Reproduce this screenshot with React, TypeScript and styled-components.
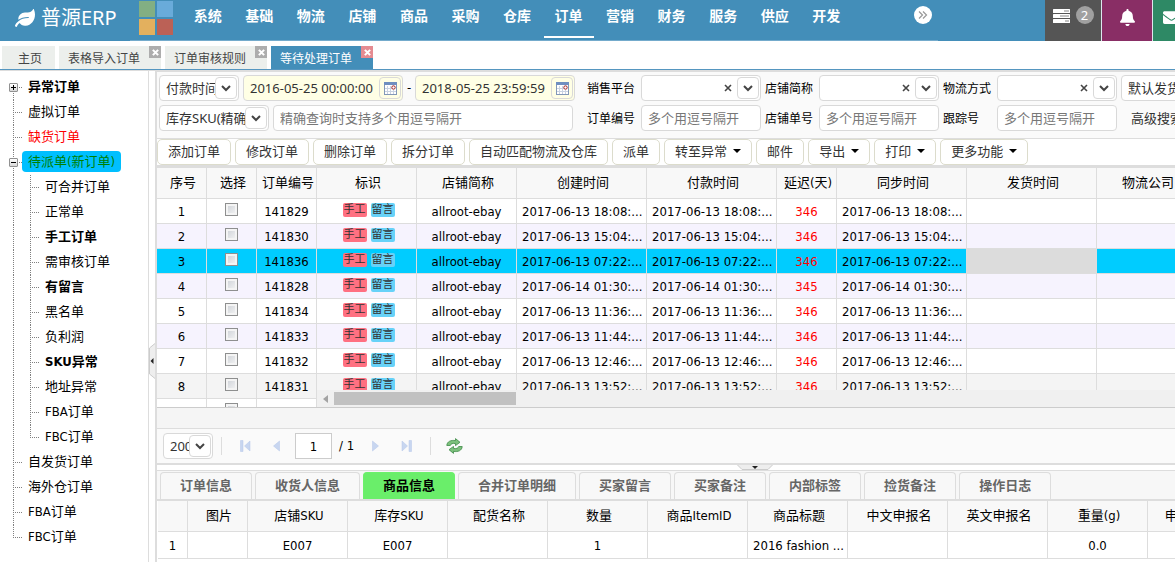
import React from 'react';
import styled, { createGlobalStyle, css } from 'styled-components';
import { FaBell, FaEnvelope, FaLeaf } from 'react-icons/fa';

const uiFont = `"Noto Sans", "Noto Sans CJK SC", sans-serif`;
const gridFont = `"DejaVu Sans Condensed", "Noto Sans CJK SC", sans-serif`;
const blue = '#438eb9';
const line = '#dddddd';

const GlobalStyle = createGlobalStyle`
  *, *::before, *::after { box-sizing: border-box; }
  body { margin: 0; background: #fff; color: #000; font: 13px/20px ${gridFont}; }
  button, input, select { margin: 0; font: inherit; color: inherit; }
  button { padding: 0; border: 0; background: none; cursor: pointer; }
  a { color: inherit; text-decoration: none; }
`;

const Page = styled.div`
  display: flex;
  flex-direction: column;
  min-height: 100vh;
  overflow: hidden;
  white-space: nowrap;
`;

/* ---------- top bar ---------- */

const TopBar = styled.header`
  display: flex;
  height: 41px;
  background: ${blue};
  color: #fff;
  font-family: ${uiFont};
`;

const Brand = styled.a`
  display: flex;
  flex: none;
  align-items: center;
  gap: 6px;
  width: 130px;
  height: 36px;
  padding-left: 15px;
  font-size: 20px;
  line-height: 36px;
`;

const MenuBar = styled.div`
  display: flex;
  flex: none;
  width: 808px;
  border-bottom: 1px solid #74abcc;
`;

const Shortcuts = styled.div`
  display: grid;
  flex: none;
  grid-template-columns: 16px 16px;
  grid-auto-rows: 16px;
  gap: 2px;
  width: 52px;
  padding: 1px 0 0 9px;
`;

const Shortcut = styled.button<{ $color: string }>`
  background: ${(p) => p.$color};
`;

const Menu = styled.nav`
  display: grid;
  flex: none;
  grid-template-columns: repeat(13, 1fr);
  justify-items: center;
  width: 670px;
`;

const MenuLink = styled.a<{ $active?: boolean }>`
  width: 50px;
  height: 38px;
  border-bottom: 2px solid ${(p) => (p.$active ? '#fff' : 'transparent')};
  font-size: 14px;
  font-weight: bold;
  line-height: 32px;
  text-align: center;
`;

const MoreButton = styled.button`
  width: 18px;
  height: 18px;
  margin: 6px 0 0 62px;
  border-radius: 9px;
  background: #fff;
  line-height: 0;
`;

const Notices = styled.div`
  display: flex;
  flex: none;
  gap: 1px;
  margin-left: 107px;
  background: #dde8ee;
`;

const Notice = styled.button<{ $color: string; $width: number }>`
  display: flex;
  justify-content: center;
  gap: 6px;
  width: ${(p) => p.$width}px;
  padding-top: 6px;
  background: ${(p) => p.$color};
  svg { flex: none; margin-top: 3px; }
`;

const Badge = styled.span`
  width: 18px;
  height: 18px;
  border-radius: 9px;
  background: #a0a0a0;
  font-size: 13px;
  line-height: 18px;
`;

/* ---------- page tabs ---------- */

const PageTabs = styled.div`
  display: flex;
  gap: 4px;
  padding: 5px 2px 0;
  border-bottom: 1px solid #5596c0;
  font: 12px/21px ${uiFont};
`;

const PageTab = styled.div<{ $active?: boolean; $closable?: boolean }>`
  position: relative;
  padding: ${(p) => (p.$closable ? '2px 21px 0 9px' : '2px 13px 0 16px')};
  background: ${(p) => (p.$active ? blue : '#ecefec')};
  color: ${(p) => (p.$active ? '#fff' : '#444')};
`;

const CloseTab = styled.button<{ $active?: boolean }>`
  position: absolute;
  top: 0;
  right: 0;
  width: 12px;
  height: 12px;
  background: ${(p) => (p.$active ? '#e58b91' : '#adadad')};
  line-height: 0;
`;

/* ---------- sidebar ---------- */

const Main = styled.div`
  display: flex;
  flex: 1;
`;

const Sidebar = styled.aside`
  flex: none;
  width: 149px;
  padding: 4px 0 0 5px;
  border-top: 1px solid ${line};
  border-right: 1px solid ${line};
`;

const Tree = styled.ul`
  margin: 0;
  padding: 0;
  list-style: none;
`;

const TreeRow = styled.li`
  display: flex;
  align-items: center;
  height: 25px;
`;

type GuideKind = 'first' | 'mid' | 'last' | 'through' | 'blank';

const dotsDown = 'repeating-linear-gradient(#808080 0 1px, transparent 1px 2px)';
const dotsAcross = 'repeating-linear-gradient(90deg, #808080 0 1px, transparent 1px 2px)';

const guideBackground: Record<GuideKind, string> = {
  first: `${dotsAcross} 8px 12px / 10px 1px no-repeat, ${dotsDown} 8px 12px / 1px 13px no-repeat`,
  mid: `${dotsAcross} 8px 12px / 10px 1px no-repeat, ${dotsDown} 8px 0 / 1px 25px no-repeat`,
  last: `${dotsAcross} 8px 12px / 10px 1px no-repeat, ${dotsDown} 8px 0 / 1px 13px no-repeat`,
  through: `${dotsDown} 8px 0 / 1px 25px no-repeat`,
  blank: 'none',
};

const Guide = styled.span<{ $kind: GuideKind }>`
  display: flex;
  align-items: center;
  flex: none;
  width: 17px;
  height: 25px;
  padding-left: 4px;
  background: ${(p) => guideBackground[p.$kind]};
`;

const Expander = styled.button`
  width: 9px;
  height: 9px;
  border: 1px solid #919191;
  border-radius: 1px;
  background: linear-gradient(#fff, #d8d8d8);
  line-height: 0;
`;

const TreeLink = styled.a<{ $bold?: boolean; $red?: boolean; $selected?: boolean }>`
  margin-bottom: 2px;
  padding: 0 6px;
  border-radius: 4px;
  line-height: 21px;
  font-weight: ${(p) => (p.$bold ? 'bold' : 'normal')};
  color: ${(p) => (p.$red ? '#f00' : p.$selected ? '#008000' : '#000')};
  background: ${(p) => (p.$selected ? '#00bfff' : 'transparent')};
`;

const SideSplitter = styled.div`
  flex: none;
  width: 6px;
  padding-top: 272px;
  border-top: 1px solid ${line};
  line-height: 0;
`;

/* ---------- workspace ---------- */

const Workspace = styled.main`
  flex: 1;
  min-width: 0;
  overflow: hidden;
  border-top: 1px solid ${line};
  border-left: 2px solid ${line};
`;

const Filters = styled.form`
  display: flex;
  flex-direction: column;
  gap: 4px;
  padding: 3px 0 7px 2px;
  border-top: 1px solid ${line};
  border-bottom: 1px solid ${line};
  background: #fafafa;
`;

const FilterRow = styled.div`
  display: flex;
  align-items: center;
  height: 26px;
`;

const Field = styled.div<{ $width: number; $yellow?: boolean; $gap?: number }>`
  display: grid;
  grid-template-columns: minmax(0, 1fr) 24px;
  align-items: center;
  flex: none;
  width: ${(p) => p.$width}px;
  height: 26px;
  margin-right: ${(p) => p.$gap ?? 4}px;
  border: 1px solid #d9d9d9;
  border-radius: 4px;
  background: ${(p) => (p.$yellow ? '#ffffe5' : '#fff')};
  font: 13px/20px ${uiFont};
  color: #333;
`;

const fieldControl = css`
  grid-row: 1;
  grid-column: 1 / -1;
  width: 100%;
  height: 24px;
  padding: 0 0 0 6px;
  border: 0;
  outline: 0;
  background: none;
`;

const TextInput = styled.input`
  ${fieldControl}
  &::placeholder { color: #777; opacity: 1; }
`;

const DateInput = styled.input`
  ${fieldControl}
  grid-column: 1;
`;

const Select = styled.select`
  ${fieldControl}
  appearance: none;
`;

const InsetBox = styled.span<{ $yellow?: boolean }>`
  display: flex;
  grid-row: 1;
  grid-column: 2;
  align-items: center;
  justify-content: center;
  justify-self: center;
  width: 22px;
  height: 22px;
  border: 1px solid #d9d9d9;
  border-radius: 4px;
  background: ${(p) => (p.$yellow ? '#ffffe5' : '#fff')};
  pointer-events: none;
`;

const CalendarButton = styled(InsetBox).attrs({ as: 'button', type: 'button' } as object)`
  pointer-events: auto;
`;

const ClearButton = styled.button`
  grid-row: 1;
  grid-column: 1;
  justify-self: end;
  width: 16px;
  height: 20px;
  line-height: 0;
`;

const Dash = styled.span`
  flex: none;
  width: 12px;
  text-align: center;
`;

const FieldLabel = styled.label`
  flex: none;
  width: 54px;
  padding-top: 2px;
  font-size: 12px;
  line-height: 16px;
`;

const AdvancedLink = styled.a`
  margin-left: 10px;
  color: #333;
  font-family: ${uiFont};
`;

const Actions = styled.div`
  display: flex;
  gap: 4px;
  border-bottom: 3px solid ${line};
`;

const ActionButton = styled.button`
  display: flex;
  flex: none;
  align-items: center;
  gap: 6px;
  height: 26px;
  padding: 0 10px 2px;
  border: 1px solid #dcdccc;
  border-radius: 5px;
  background: #fff;
  color: #333;
  font: 13px/22px ${uiFont};
`;

const DownTriangle = styled.span`
  width: 8px;
  border: 4px solid transparent;
  border-top-color: #000;
  border-bottom-width: 0;
`;

/* ---------- data grids ---------- */

const Grid = styled.div`
  display: flex;
  height: 240px;
  overflow: hidden;
  border-bottom: 1px solid #ccc;
`;

const FrozenPart = styled.div`
  flex: none;
  overflow: hidden;
`;

const ScrollPart = styled.div`
  display: flex;
  flex: 1;
  flex-direction: column;
  min-width: 0;
`;

const ScrollBody = styled.div`
  flex: 1;
  min-height: 0;
  overflow: hidden;
`;

const Table = styled.table`
  table-layout: fixed;
  width: 0;
  border-collapse: separate;
  border-spacing: 0;
`;

const Th = styled.th`
  height: 31px;
  padding: 0 0 0 3px;
  overflow: hidden;
  border-right: 1px solid ${line};
  border-bottom: 1px solid ${line};
  background: #f8f8f8;
  font-weight: normal;
  line-height: 30px;
`;

const Td = styled.td<{ $left?: boolean; $late?: boolean; $muted?: boolean; $tall?: boolean }>`
  height: ${(p) => (p.$tall ? 27 : 25)}px;
  padding: 2px 5px 0;
  overflow: hidden;
  border-right: 1px solid ${line};
  border-bottom: 1px solid ${line};
  text-align: ${(p) => (p.$left ? 'left' : 'center')};
  line-height: ${(p) => (p.$tall ? 24 : 22)}px;
  color: ${(p) => (p.$late ? '#f00' : 'inherit')};
  background: ${(p) => (p.$muted ? '#dcdcdc' : 'transparent')};
`;

const Row = styled.tr<{ $tone: 'plain' | 'striped' | 'selected' | 'hover' }>`
  background: ${(p) => ({ plain: '#fff', striped: '#f6f3fe', selected: '#00ccff', hover: '#f4f4f4' })[p.$tone]};
`;

const CheckBox = styled.input`
  display: block;
  appearance: none;
  width: 13px;
  height: 13px;
  margin: 0 auto 5px;
  border: 1px solid #8e8f8f;
  background: linear-gradient(135deg, #cbcfd5, #f6f6f6);
  box-shadow: inset 0 0 0 2px #f4f4f4;
`;

const Tags = styled.div`
  display: flex;
  justify-content: center;
  gap: 4px;
  margin-bottom: 4px;
  padding-left: 4px;
`;

const Tag = styled.span<{ $color: string }>`
  width: 24px;
  border-radius: 2px;
  background: ${(p) => p.$color};
  font-size: 11px;
  line-height: 14px;
  color: #333;
`;

const ScrollTrack = styled.div`
  display: flex;
  flex: none;
  align-items: center;
  gap: 6px;
  height: 17px;
  padding-left: 6px;
  background: #f0f0f0;
`;

const LeftTriangle = styled.span`
  border: 4px solid transparent;
  border-right: 5px solid #a3a3a3;
  border-left-width: 0;
`;

const ScrollThumb = styled.span`
  width: 182px;
  height: 13px;
  background: #c1c1c1;
`;

const GridFooter = styled.div`
  height: 21px;
  border-bottom: 1px solid ${line};
  background: #f5f5f5;
`;

const Pager = styled.div`
  display: flex;
  align-items: center;
  height: 36px;
  padding-left: 6px;
  border-bottom: 2px solid ${line};
  background: #fafafa;
`;

const PagerButton = styled.button`
  display: flex;
  align-items: center;
  justify-content: center;
  width: 31px;
  height: 24px;
`;

const Divider = styled.span`
  width: 1px;
  height: 18px;
  margin: 0 8px;
  background: ${line};
`;

const PageInput = styled.input`
  width: 37px;
  height: 26px;
  margin: 0 7px 0 3px;
  padding: 0;
  border: 1px solid #ccc;
  background: #fff;
  text-align: center;
`;

const PageCount = styled.span`
  width: 21px;
`;

const BottomSplitter = styled.div`
  height: 5px;
  padding-left: 57%;
  line-height: 0;
`;

const DetailTabs = styled.div`
  display: flex;
  gap: 3px;
  padding: 1px 0 0 3px;
  border-top: 1px solid ${line};
  border-bottom: 2px solid ${line};
  background: #f7f7f7;
`;

const DetailTab = styled.button<{ $active?: boolean }>`
  flex: none;
  height: 27px;
  padding: 0 19px 2px;
  border: 1px solid ${(p) => (p.$active ? '#6cf06c' : line)};
  border-bottom: 0;
  border-radius: 4px 4px 0 0;
  background: ${(p) => (p.$active ? '#6aee6a' : '#f8f8f8')};
  color: ${(p) => (p.$active ? '#000' : '#666')};
  font: bold 13px/24px ${uiFont};
`;

const DetailTable = styled.div`
  padding-left: 1px;
  overflow: hidden;
`;

/* ---------- small drawings ---------- */

const Chevron = () => (
  <svg width="10" height="7" viewBox="0 0 10 7" fill="none" stroke="#444" strokeWidth="2">
    <path d="M1 1l4 4 4-4" />
  </svg>
);

const CalendarIcon = () => (
  <svg width="13" height="13" viewBox="0 0 13 13">
    <rect x="0.5" y="0.5" width="12" height="12" fill="#fff" stroke="#8298b8" />
    <path d="M0 0h13v3H0z" fill="#6f8fc0" />
    <path d="M3.5 4v8M6.5 4v8M9.5 8v4M1 6.5h7M1 9.5h11" stroke="#c9d3e2" />
    <circle cx="9.5" cy="5.5" r="1.7" fill="#fff" stroke="#a02020" />
  </svg>
);

const Cross = ({ color, size }: { color: string; size: number }) => (
  <svg width={size} height={size} viewBox="0 0 8 8" stroke={color} strokeWidth={size > 7 ? 1.6 : 2.4}>
    <path d="M1 1l6 6M7 1l-6 6" />
  </svg>
);

const PlusMinus = ({ plus }: { plus: boolean }) => (
  <svg width="7" height="7" viewBox="0 0 7 7" fill="#000">
    <path d="M1 3h5v1H1z" />
    {plus && <path d="M3 1h1v5H3z" />}
  </svg>
);

const TasksIcon = () => (
  <svg width="17" height="14" viewBox="0 0 17 14" fill="#fff">
    <rect width="17" height="4" rx="0.5" />
    <rect y="5" width="17" height="4" rx="0.5" />
    <rect y="10" width="17" height="4" rx="0.5" />
    <path d="M11 1.5h5v1h-5zM7 6.5h9v1H7zM12 11.5h4v1h-4z" fill="#888" />
  </svg>
);

const PageArrow = ({ kind }: { kind: 'first' | 'prev' | 'next' | 'last' }) => {
  const back = kind === 'first' || kind === 'prev';
  const end = kind === 'first' || kind === 'last';
  return (
    <svg width="11" height="12" viewBox="0 0 11 12" fill="#c8d6f0" stroke="#b4c6e8" strokeWidth="0.5">
      <g transform={back ? undefined : 'matrix(-1 0 0 1 11 0)'}>
        {end && <path d="M0.5 0.5h2.5v11h-2.5z" />}
        <path d={end ? 'M10 1v10L4.5 6z' : 'M8.5 1v10L2.5 6z'} />
      </g>
    </svg>
  );
};

const RefreshIcon = () => (
  <svg width="17" height="16" viewBox="0 0 17 16" fill="#7cc07c" stroke="#3f8a48" strokeWidth="0.8">
    <path d="M0.8 7.5C1 3.5 5 1.8 9.5 2.6V0.6L14 4.3 9.5 7.6V5.6C6.5 5 4.8 5.8 4.3 7.5z" />
    <path d="M16.2 8.5C16 12.5 12 14.2 7.5 13.4v2L3 11.7 7.5 8.4v2c3 0.6 4.700-0.2 5.200-1.9z" />
  </svg>
);

/* ---------- data ---------- */

const shortcuts = ['#82af83', '#69abda', '#e3b05e', '#bb6156'];
const menu = ['系统', '基础', '物流', '店铺', '商品', '采购', '仓库', '订单', '营销', '财务', '服务', '供应', '开发'];

type Node = { text: string; guides: GuideKind[]; bold?: boolean; red?: boolean; selected?: boolean; toggle?: 'plus' | 'minus' };
const child = (text: string, bold = false, last = false): Node => ({ text, bold, guides: ['through', last ? 'last' : 'mid'] });
const nodes: Node[] = [
  { text: '异常订单', guides: ['first'], bold: true, toggle: 'plus' },
  { text: '虚拟订单', guides: ['mid'] },
  { text: '缺货订单', guides: ['mid'], red: true },
  { text: '待派单(新订单)', guides: ['mid'], selected: true, toggle: 'minus' },
  child('可合并订单'),
  child('正常单'),
  child('手工订单', true),
  child('需审核订单'),
  child('有留言', true),
  child('黑名单'),
  child('负利润'),
  child('SKU异常', true),
  child('地址异常'),
  child('FBA订单'),
  child('FBC订单', false, true),
  { text: '自发货订单', guides: ['mid'] },
  { text: '海外仓订单', guides: ['mid'] },
  { text: 'FBA订单', guides: ['mid'] },
  { text: 'FBC订单', guides: ['last'] },
];

const actions: [string, boolean?][] = [
  ['添加订单'], ['修改订单'], ['删除订单'], ['拆分订单'], ['自动匹配物流及仓库'], ['派单'],
  ['转至异常', true], ['邮件'], ['导出', true], ['打印', true], ['更多功能', true],
];

const orders = [
  { id: '141829', time: '2017-06-13 18:08:...', late: 346 },
  { id: '141830', time: '2017-06-13 15:04:...', late: 346 },
  { id: '141836', time: '2017-06-13 07:22:...', late: 346 },
  { id: '141828', time: '2017-06-14 01:30:...', late: 345 },
  { id: '141834', time: '2017-06-13 11:36:...', late: 346 },
  { id: '141833', time: '2017-06-13 11:44:...', late: 346 },
  { id: '141832', time: '2017-06-13 12:46:...', late: 346 },
  { id: '141831', time: '2017-06-13 13:52:...', late: 346 },
];
const tone = (i: number) => (i === 2 ? 'selected' : i === 7 ? 'hover' : i % 2 ? 'striped' : 'plain');

const frozenColumns: [string, number][] = [['序号', 50], ['选择', 50], ['订单编号', 60]];
const scrollColumns: [string, number][] = [
  ['标识', 100], ['店铺简称', 100], ['创建时间', 130], ['付款时间', 130], ['延迟(天)', 60],
  ['同步时间', 130], ['发货时间', 130], ['物流公司', 100],
];
const detailColumns: [string, number, string][] = [
  ['', 30, '1'], ['图片', 60, ''], ['店铺SKU', 100, 'E007'], ['库存SKU', 100, 'E007'], ['配货名称', 100, ''],
  ['数量', 100, '1'], ['商品ItemID', 100, ''], ['商品标题', 100, '2016 fashion ...'], ['中文申报名', 100, ''],
  ['英文申报名', 100, ''], ['重量(g)', 100, '0.0'], ['申报价格($)', 100, ''],
];
const detailTabs = ['订单信息', '收货人信息', '商品信息', '合并订单明细', '买家留言', '买家备注', '内部标签', '捡货备注', '操作日志'];

/* ---------- composed parts ---------- */

const Columns = ({ columns }: { columns: (readonly [string, number, ...string[]])[] }) => (
  <>
    <colgroup>
      {columns.map(([name, width]) => <col key={name} width={width} />)}
    </colgroup>
    <thead>
      <tr>{columns.map(([name]) => <Th key={name} scope="col">{name}</Th>)}</tr>
    </thead>
  </>
);

const SelectField = ({ label, width, value }: { label: string; width: number; value: string }) => (
  <Field $width={width}>
    <Select aria-label={label} defaultValue={value}><option>{value}</option></Select>
    <InsetBox><Chevron /></InsetBox>
  </Field>
);

const DateField = ({ label, value, gap }: { label: string; value: string; gap: number }) => (
  <Field $width={160} $yellow $gap={gap}>
    <DateInput aria-label={label} defaultValue={value} />
    <CalendarButton aria-label={`选择${label}`} $yellow><CalendarIcon /></CalendarButton>
  </Field>
);

const ComboField = ({ id, label }: { id: string; label: string }) => (
  <>
    <FieldLabel htmlFor={id}>{label}</FieldLabel>
    <Field $width={120}>
      <Select id={id} defaultValue=""><option value="" /></Select>
      <ClearButton type="button" aria-label="清除"><Cross color="#444" size={8} /></ClearButton>
      <InsetBox><Chevron /></InsetBox>
    </Field>
  </>
);

const TextField = ({ id, label }: { id: string; label: string }) => (
  <>
    <FieldLabel htmlFor={id}>{label}</FieldLabel>
    <Field $width={120}><TextInput id={id} placeholder="多个用逗号隔开" /></Field>
  </>
);

export default function App() {
  return (
    <Page>
      <GlobalStyle />
      <TopBar>
        <Brand href="#"><FaLeaf size={20} />普源ERP</Brand>
        <MenuBar>
          <Shortcuts>
            {shortcuts.map((c, i) => <Shortcut key={c} $color={c} aria-label={`快捷方式${i + 1}`} />)}
          </Shortcuts>
          <Menu>
            {menu.map((m) => <MenuLink key={m} href="#" $active={m === '订单'}>{m}</MenuLink>)}
          </Menu>
          <MoreButton aria-label="更多">
            <svg width="18" height="18" viewBox="0 0 18 18" fill="none" stroke="#999">
              <path d="M5 5.5l3.5 3.5L5 12.5M9 5.5l3.5 3.5L9 12.5" strokeWidth="1.2" />
            </svg>
          </MoreButton>
        </MenuBar>
        <Notices>
          <Notice $color="#555555" $width={56} aria-label="任务"><TasksIcon /><Badge>2</Badge></Notice>
          <Notice $color="#892e65" $width={50} aria-label="通知"><FaBell size={17} /></Notice>
          <Notice $color="#2e8965" $width={36} aria-label="邮件"><FaEnvelope size={17} /></Notice>
        </Notices>
      </TopBar>

      <PageTabs>
        <PageTab>主页</PageTab>
        {['表格导入订单', '订单审核规则', '等待处理订单'].map((t, i) => (
          <PageTab key={t} $closable $active={i === 2}>
            {t}
            <CloseTab $active={i === 2} aria-label={`关闭${t}`}><Cross color="#fff" size={7} /></CloseTab>
          </PageTab>
        ))}
      </PageTabs>

      <Main>
        <Sidebar>
          <Tree>
            {nodes.map((n, i) => (
              <TreeRow key={i}>
                {n.guides.map((g, j) => (
                  <Guide key={j} $kind={g}>
                    {n.toggle && (
                      <Expander aria-label={n.text}><PlusMinus plus={n.toggle === 'plus'} /></Expander>
                    )}
                  </Guide>
                ))}
                <TreeLink href="#" $bold={n.bold} $red={n.red} $selected={n.selected}>{n.text}</TreeLink>
              </TreeRow>
            ))}
          </Tree>
        </Sidebar>
        <SideSplitter>
          <svg width="6" height="36" viewBox="0 0 6 36">
            <path d="M6 0.5L0.5 5v26L6 35.5" fill="#eee" stroke="#ccc" />
            <path d="M4.5 15v6L1.5 18z" fill="#222" />
          </svg>
        </SideSplitter>

        <Workspace>
          <Filters onSubmit={(e) => e.preventDefault()}>
            <FilterRow>
              <SelectField label="时间类型" width={80} value="付款时间" />
              <DateField label="开始时间" value="2016-05-25 00:00:00" gap={0} />
              <Dash>-</Dash>
              <DateField label="结束时间" value="2018-05-25 23:59:59" gap={12} />
              <ComboField id="platform" label="销售平台" />
              <ComboField id="shop" label="店铺简称" />
              <ComboField id="shipping" label="物流方式" />
              <SelectField label="发货仓库" width={120} value="默认发货仓库" />
            </FilterRow>
            <FilterRow>
              <SelectField label="查询类型" width={110} value="库存SKU(精确)" />
              <Field $width={300} $gap={14}>
                <TextInput aria-label="查询内容" placeholder="精确查询时支持多个用逗号隔开" />
              </Field>
              <TextField id="order-no" label="订单编号" />
              <TextField id="shop-no" label="店铺单号" />
              <TextField id="track-no" label="跟踪号" />
              <AdvancedLink href="#">高级搜索</AdvancedLink>
            </FilterRow>
          </Filters>

          <Actions>
            {actions.map(([text, more]) => (
              <ActionButton key={text}>{text}{more && <DownTriangle />}</ActionButton>
            ))}
          </Actions>

          <Grid>
            <FrozenPart>
              <Table>
                <Columns columns={frozenColumns} />
                <tbody>
                  {orders.map((o, i) => (
                    <Row key={o.id} $tone={tone(i)}>
                      <Td>{i + 1}</Td>
                      <Td><CheckBox type="checkbox" aria-label={`选择订单${o.id}`} /></Td>
                      <Td>{o.id}</Td>
                    </Row>
                  ))}
                  <Row $tone="plain">
                    <Td />
                    <Td><CheckBox type="checkbox" aria-label="选择订单" /></Td>
                    <Td />
                  </Row>
                </tbody>
              </Table>
            </FrozenPart>
            <ScrollPart>
              <ScrollBody>
                <Table>
                  <Columns columns={scrollColumns} />
                  <tbody>
                    {orders.map((o, i) => (
                      <Row key={o.id} $tone={tone(i)}>
                        <Td>
                          <Tags><Tag $color="#ff7081">手工</Tag><Tag $color="#67d2f8">留言</Tag></Tags>
                        </Td>
                        <Td>allroot-ebay</Td>
                        <Td $left>{o.time}</Td>
                        <Td $left>{o.time}</Td>
                        <Td $late>{o.late}</Td>
                        <Td $left>{o.time}</Td>
                        <Td $muted={i === 2} />
                        <Td />
                      </Row>
                    ))}
                  </tbody>
                </Table>
              </ScrollBody>
              <ScrollTrack><LeftTriangle /><ScrollThumb /></ScrollTrack>
            </ScrollPart>
          </Grid>
          <GridFooter />

          <Pager>
            <Field $width={50} $gap={0}>
              <Select aria-label="每页条数" defaultValue="200"><option>200</option></Select>
              <InsetBox><Chevron /></InsetBox>
            </Field>
            <Divider />
            <PagerButton aria-label="首页"><PageArrow kind="first" /></PagerButton>
            <PagerButton aria-label="上一页"><PageArrow kind="prev" /></PagerButton>
            <PageInput aria-label="页码" defaultValue="1" />
            <PageCount>/ 1</PageCount>
            <PagerButton aria-label="下一页"><PageArrow kind="next" /></PagerButton>
            <PagerButton aria-label="末页"><PageArrow kind="last" /></PagerButton>
            <Divider />
            <PagerButton aria-label="刷新"><RefreshIcon /></PagerButton>
          </Pager>

          <BottomSplitter>
            <svg width="36" height="5" viewBox="0 0 36 5">
              <path d="M0.5 0L5 4.5h26L35.5 0" fill="#eee" stroke="#ccc" />
              <path d="M15 1h6l-3 3z" fill="#222" />
            </svg>
          </BottomSplitter>

          <DetailTabs>
            {detailTabs.map((t) => <DetailTab key={t} $active={t === '商品信息'}>{t}</DetailTab>)}
          </DetailTabs>
          <DetailTable>
            <Table>
              <Columns columns={detailColumns} />
              <tbody>
                <tr>
                  {detailColumns.map(([name, , value]) => <Td key={name} $tall>{value}</Td>)}
                </tr>
              </tbody>
            </Table>
          </DetailTable>
        </Workspace>
      </Main>
    </Page>
  );
}
